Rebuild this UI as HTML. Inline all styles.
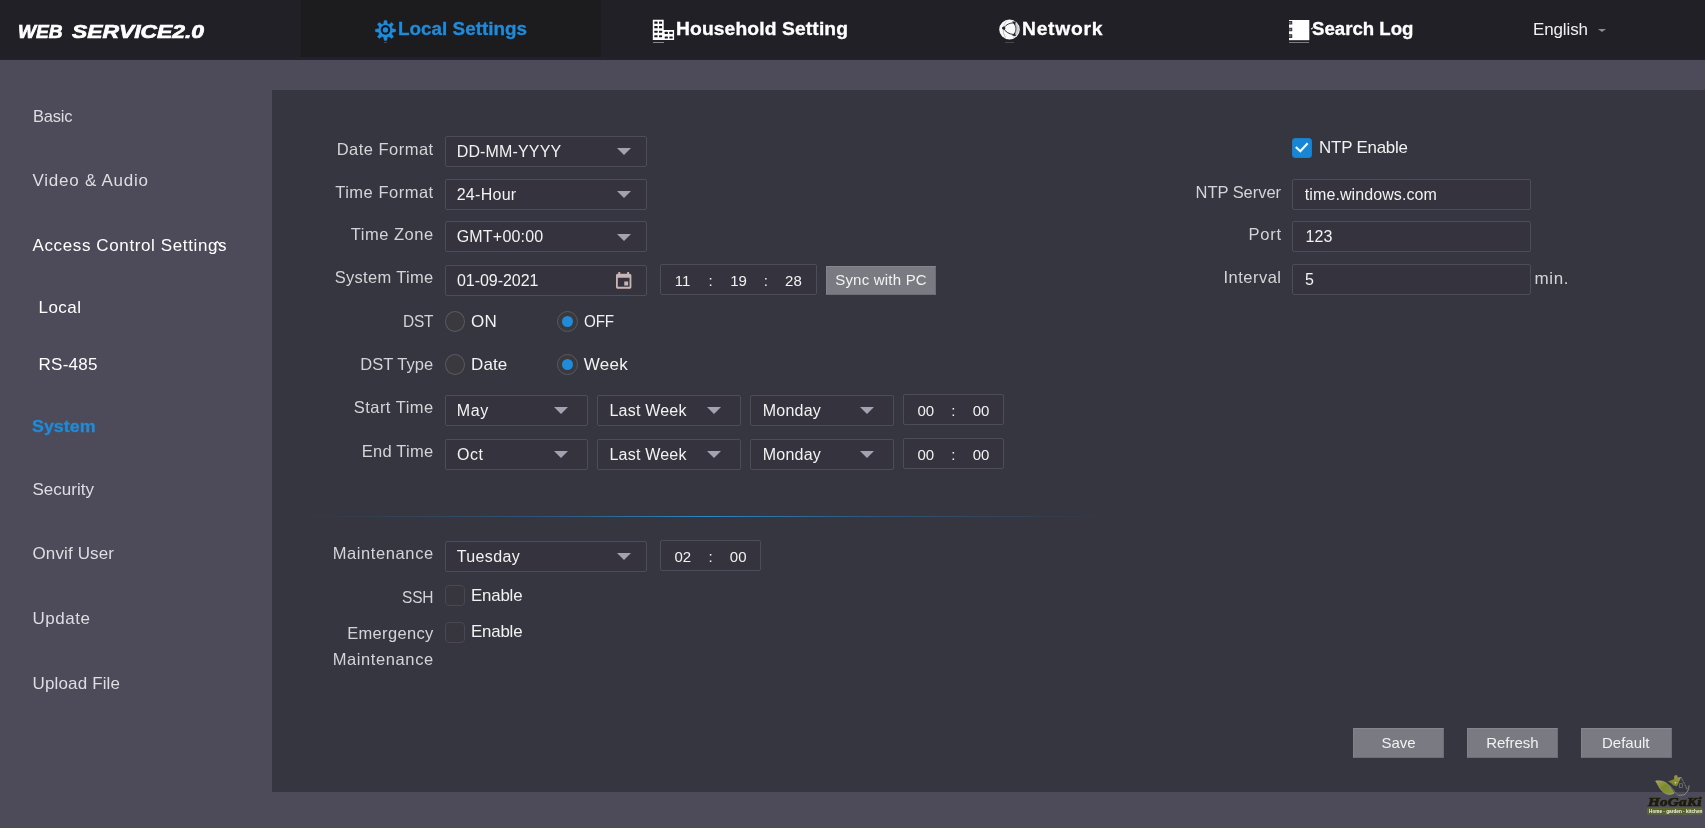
<!DOCTYPE html>
<html lang="en">
<head>
<meta charset="utf-8">
<title>WEB SERVICE2.0</title>
<style>
*{box-sizing:border-box;margin:0;padding:0}
html,body{width:1705px;height:828px;overflow:hidden}
body{background:#4d4b59;font-family:"Liberation Sans",Arial,sans-serif;color:#fff;position:relative}
#root{position:absolute;left:0;top:0;width:1705px;height:828px;will-change:transform}
.t{position:absolute;white-space:nowrap;display:block}
#header{position:absolute;left:0;top:0;width:1705px;height:60px;background:#212027}
#tab-active{position:absolute;left:301px;top:0;width:300px;height:57px;background:#1c1b1e}
#hstrip{position:absolute;left:0;top:57px;width:1705px;height:3px;background:#23212b}
.logo{position:absolute;top:19px;font-weight:bold;font-style:italic;font-size:18.5px;line-height:26px;color:#fff;white-space:nowrap;transform-origin:0 50%;-webkit-text-stroke:0.7px #fff}
#lang-caret{position:absolute;left:1598px;top:29px;width:0;height:0;border-left:4px solid transparent;border-right:4px solid transparent;border-top:3.600px solid #8d8c9a}
#panel{position:absolute;left:272px;top:90px;width:1433px;height:702px;background:#363640}
.box{position:absolute;height:31px;border:1px solid #4d4c5a;background:#35343e;border-radius:2px}
.car{position:absolute;width:0;height:0;border-left:7px solid transparent;border-right:7px solid transparent;border-top:7px solid #a3a2b1}
.radio{position:absolute;width:21px;height:21px;border-radius:50%;border:1px solid #5a595e;background:#3a393e}
.radio.on::after{content:"";position:absolute;left:4px;top:4px;width:11px;height:11px;border-radius:50%;background:#1f8bd9}
.chk{position:absolute;width:20px;height:21px;border-radius:4px;border:1px solid #484752;background:#37363f}
.chk.on{height:20px;background:#1786d4;border-color:#1c7cc4;border-radius:3px}
.btn{position:absolute;height:30px;background:#7a7a82;border-top:1px solid #86868e;border-left:1px solid #828289;border-bottom:1px solid #6d6d75;border-right:1px solid #6d6d75}
#hr{position:absolute;left:305px;top:516px;width:805px;height:1px;background:linear-gradient(90deg,rgba(40,120,180,0) 0%,rgba(42,110,165,.55) 30%,rgba(45,135,195,1) 50%,rgba(42,110,165,.55) 70%,rgba(40,120,180,0) 100%)}
svg{position:absolute;overflow:visible}
</style>
</head>
<body>
<div id="root">
<div id="header">
  <div id="tab-active"></div>
  <div id="hstrip"></div>
  <div class="logo" style="left:17.800px;transform:scaleX(1.030)">WEB</div>
  <div class="logo" style="left:72px;transform:scaleX(1.235)">SERVICE2.0</div>
  <div id="lang-caret"></div>
</div>
<div id="panel"></div>

<!-- select boxes -->
<div class="box" style="left:445px;top:136px;width:202px"></div><i class="car" style="left:617px;top:148px"></i>
<div class="box" style="left:445px;top:179px;width:202px"></div><i class="car" style="left:617px;top:191px"></i>
<div class="box" style="left:445px;top:221px;width:202px"></div><i class="car" style="left:617px;top:234px"></i>
<div class="box" style="left:445px;top:265px;width:202px"></div>
<div class="box" style="left:660px;top:264px;width:157px"></div>
<div class="btn" style="left:826px;top:266px;width:110px;height:29px"></div>

<div class="radio" style="left:445px;top:311px;width:20px"></div>
<div class="radio on" style="left:557px;top:311px"></div>
<div class="radio" style="left:445px;top:354px;width:20px"></div>
<div class="radio on" style="left:557px;top:354px"></div>

<div class="box" style="left:445px;top:395px;width:143px"></div><i class="car" style="left:554px;top:407px"></i>
<div class="box" style="left:597px;top:395px;width:144px"></div><i class="car" style="left:707px;top:407px"></i>
<div class="box" style="left:750px;top:395px;width:144px"></div><i class="car" style="left:860px;top:407px"></i>
<div class="box" style="left:903px;top:394px;width:101px"></div>
<div class="box" style="left:445px;top:439px;width:143px"></div><i class="car" style="left:554px;top:451px"></i>
<div class="box" style="left:597px;top:439px;width:144px"></div><i class="car" style="left:707px;top:451px"></i>
<div class="box" style="left:750px;top:439px;width:144px"></div><i class="car" style="left:860px;top:451px"></i>
<div class="box" style="left:903px;top:438px;width:101px"></div>

<div id="hr"></div>

<div class="box" style="left:445px;top:541px;width:202px"></div><i class="car" style="left:617px;top:553px"></i>
<div class="box" style="left:660px;top:540px;width:101px"></div>
<div class="chk" style="left:445px;top:585px"></div>
<div class="chk" style="left:445px;top:622px"></div>

<!-- NTP -->
<div class="chk on" style="left:1292.400px;top:138.400px"></div>
<svg style="left:1292.400px;top:138.400px" width="20" height="20" viewBox="0 0 20 20"><path d="M3.800 9 L8.300 13.300 L15.700 5.200" fill="none" stroke="#effbff" stroke-width="2.100"/></svg>
<div class="box" style="left:1292px;top:179px;width:239px"></div>
<div class="box" style="left:1292px;top:221px;width:239px"></div>
<div class="box" style="left:1292px;top:264px;width:239px"></div>

<div class="btn" style="left:1353px;top:728px;width:91px"></div>
<div class="btn" style="left:1467px;top:728px;width:91px"></div>
<div class="btn" style="left:1581px;top:728px;width:91px"></div>


<!-- nav icons -->
<svg style="left:375px;top:20px" width="21" height="21" viewBox="0 0 21 21"><path d="M8.63 3.75 L9.23 0.38 L11.77 0.38 L12.37 3.75 L13.95 4.41 L16.76 2.44 L18.56 4.24 L16.59 7.05 L17.25 8.63 L20.62 9.23 L20.62 11.77 L17.25 12.37 L16.59 13.95 L18.56 16.76 L16.76 18.56 L13.95 16.59 L12.37 17.25 L11.77 20.62 L9.23 20.62 L8.63 17.25 L7.05 16.59 L4.24 18.56 L2.44 16.76 L4.41 13.95 L3.75 12.37 L0.38 11.77 L0.38 9.23 L3.75 8.63 L4.41 7.05 L2.44 4.24 L4.24 2.44 L7.05 4.41Z" fill="#1f8bd9" stroke="#1f8bd9" stroke-width="0.400" stroke-linejoin="round"/><circle cx="10.500" cy="9.900" r="4.800" fill="#0d1a26"/><circle cx="10.500" cy="9.900" r="2.600" fill="#1f8bd9"/></svg>
<div style="position:absolute;left:384px;top:42px;width:3px;height:1px;background:#45444b"></div>
<svg style="left:653px;top:20px" width="22" height="20" viewBox="0 0 22 20"><path d="M-0.200 -0.200H10.700V10H21.100V19.900H-0.200Z" fill="#fff"/>
<g fill="#1b1a20"><rect x="1.3" y="1.55" width="3.3" height="2.100" rx="0.500"/><rect x="6.0" y="1.55" width="3.1" height="2.100" rx="0.500"/><rect x="1.3" y="6.05" width="3.3" height="2.100" rx="0.500"/><rect x="6.0" y="6.05" width="3.1" height="2.100" rx="0.500"/><rect x="1.3" y="10.75" width="3.3" height="2.100" rx="0.500"/><rect x="6.0" y="10.75" width="3.1" height="2.100" rx="0.500"/><rect x="1.3" y="15.25" width="3.3" height="2.100" rx="0.500"/><rect x="6.0" y="15.25" width="3.1" height="2.100" rx="0.500"/><rect x="11.7" y="11.85" width="3.2" height="2.100" rx="0.500"/><rect x="16.4" y="11.85" width="3.3" height="2.100" rx="0.500"/><rect x="11.7" y="16.45" width="3.2" height="2.100" rx="0.500"/><rect x="16.4" y="16.45" width="3.3" height="2.100" rx="0.500"/></g></svg>
<div style="position:absolute;left:653px;top:42px;width:11px;height:1px;background:#8a8990"></div>
<svg style="left:999px;top:19.400px" width="21" height="21" viewBox="0 0 21 21"><ellipse cx="10.500" cy="10.500" rx="10.300" ry="9.900" fill="#f8f8f8"/>
<path d="M15.100 3.900 Q19 9.800 15.100 15.700 L13.600 19.400 Q19.600 16.800 20.300 10.400 Q19.800 4.200 14.400 1.600Z" fill="#cfcfd2"/>
<g fill="none" stroke="#2e2d34"><path d="M4.500 9.100 Q8.400 3.700 15.100 3.900" stroke-width="0.900"/><path d="M4.500 9.100 Q7 14.600 15.100 15.700" stroke-width="1"/><path d="M15.100 3.900 Q18.800 9.800 15.100 15.700" stroke="#6c6b72" stroke-width="1.300"/><path d="M4.500 9.100 Q3.200 14 6.500 18.500" stroke="#b0b0b5" stroke-width="0.800"/><path d="M4.500 9.100 Q4.500 4.500 8 1.500" stroke="#c4c4c8" stroke-width="0.700"/></g>
<g fill="#25242b"><circle cx="4.700" cy="9.100" r="1.700"/><path d="M13 2.600 L16.900 2.500 L15.900 6.300Z"/><path d="M13.200 16.700 L15.700 13.400 L17 17Z"/></g></svg>
<div style="position:absolute;left:1005px;top:42px;width:9px;height:1px;background:#48474e"></div>
<svg style="left:1288.800px;top:19.800px" width="21" height="21" viewBox="0 0 21 21"><rect x="0" y="0" width="20.300" height="20.200" fill="#fff"/>
<g fill="#77767c" stroke="#34333a" stroke-width="1.100"><path d="M0 1.500H2.700V4H0"/><path d="M0 8.200H2.700V10.800H0"/><path d="M0 14.700H2.700V17.400H0"/></g><path d="M21.600 9 L23.800 7 L23.800 8.600 L22.800 9.600Z" fill="#fff"/></svg>
<div style="position:absolute;left:1289px;top:42px;width:20px;height:1px;background:#7d7c84"></div>
<!-- sidebar chevron -->
<svg style="left:213px;top:240px" width="10" height="8" viewBox="0 0 10 8"><path d="M1 4.600 L4.200 1.600 L9 6.400" fill="none" stroke="#fff" stroke-width="1.300"/></svg>
<!-- calendar icon -->
<svg style="left:616px;top:272.300px" width="15.400" height="16.700" viewBox="0 0 16 17" preserveAspectRatio="none"><path d="M2.4 0h2v1.8h7.2V0h2v1.8h0.6c1 0 1.8 0.8 1.8 1.8V15.2c0 1-0.8 1.8-1.8 1.8H1.8C0.8 17 0 16.2 0 15.2V3.6C0 2.600 0.800 1.800 1.800 1.800h0.600zM1.900 5.900V15.100H14.100V5.900zM8.600 9.800h4v4h-4z" fill="#c9b5b5" fill-rule="evenodd"/></svg>


<!-- watermark -->
<svg style="left:1647px;top:775px" width="58" height="42" viewBox="0 0 58 42">
<defs><linearGradient id="lg" x1="0" y1="0" x2="1" y2="1"><stop offset="0" stop-color="#a9a552"/><stop offset="0.45" stop-color="#7d8a2c"/><stop offset="1" stop-color="#8a9636"/></linearGradient>
<linearGradient id="rg" x1="0" y1="1" x2="1" y2="0"><stop offset="0" stop-color="#6f8228"/><stop offset="0.6" stop-color="#8a8f38"/><stop offset="1" stop-color="#b0a45a"/></linearGradient></defs>
<path d="M8.6 6 C13 5.200 18.500 6.200 22 10.400 C24.200 13.200 25.400 16 27.300 17.900 C25.400 19.400 22 19.800 19.600 19 C15.800 17.600 13.400 14.400 11.800 11.600 C10.600 9.500 9.800 7.500 8.600 6Z" fill="url(#lg)" stroke="#b9b98a" stroke-width="0.5"/>
<path d="M20.8 6.400 L27 4.200 L27.200 1.200 C27.600 0.200 29.800 0 30.200 0.600 L30.600 2.600 L34.200 2.100 L30 11.300 L26.600 10.600 C25.400 8.800 23.400 7.200 20.800 6.400Z" fill="url(#rg)"/>
<circle cx="28.500" cy="7.700" r="0.800" fill="#e8e4a8"/>
<path d="M34.200 2.400 L40.200 14.200" fill="none" stroke="#7f9088" stroke-width="1.100" stroke-dasharray="1 0.700"/>
<path d="M23 10.600 C25.500 13.500 28 17.500 31.200 20.200" fill="none" stroke="#8d9c8c" stroke-width="1" stroke-dasharray="0.900 0.600"/>
<path d="M42 10.400 C42.200 14.500 40 18 37 19.900 L31.200 20.300" fill="none" stroke="#8e9684" stroke-width="0.900"/>
<rect x="32.600" y="8.800" width="3" height="3.600" fill="none" stroke="#85878c" stroke-width="0.600"/>
<g transform="translate(1 30.800) scale(1.170 1)"><text x="0" y="0" font-family="'Liberation Serif',serif" font-weight="bold" font-style="italic" font-size="13" fill="#1d1d08" stroke="#1d1d08" stroke-width="0.700" letter-spacing="0.200">HoGaKi</text></g>
<rect x="0.400" y="33" width="54.800" height="6.300" rx="0.800" fill="#566328" stroke="#6f7a44" stroke-width="0.400"/>
<g transform="translate(2 38) scale(0.500)"><text x="0" y="0" font-family="'Liberation Sans',sans-serif" font-weight="bold" font-size="9.400" fill="#f4f4ea">Home - garden - kitchen</text></g>
</svg>

<span class="t" style="left:398.0px;top:16.6px;font-size:18px;line-height:25px;color:#1f8bd9;font-weight:bold;-webkit-text-stroke:0.3px #1f8bd9;transform-origin:0 0;transform:scaleX(1.049);">Local Settings</span>
<span class="t" style="left:675.8px;top:16.6px;font-size:18px;line-height:25px;color:#fff;font-weight:bold;-webkit-text-stroke:0.3px #fff;letter-spacing:0.11px;transform-origin:0 0;transform:scaleX(1.070);">Household Setting</span>
<span class="t" style="left:1021.9px;top:16.6px;font-size:18px;line-height:25px;color:#fff;font-weight:bold;-webkit-text-stroke:0.3px #fff;letter-spacing:0.70px;transform-origin:0 0;transform:scaleX(1.070);">Network</span>
<span class="t" style="left:1311.5px;top:16.6px;font-size:18px;line-height:25px;color:#fff;font-weight:bold;-webkit-text-stroke:0.3px #fff;transform-origin:0 0;transform:scaleX(1.035);">Search Log</span>
<span class="t" style="left:1533.0px;top:17.8px;font-size:17px;line-height:24px;color:#f0f0f0;letter-spacing:-0.13px;">English</span>
<span class="t" style="left:32.5px;top:104.9px;font-size:17px;line-height:24px;color:#dedee2;letter-spacing:-0.20px;transform-origin:0 0;transform:scaleX(0.969);">Basic</span>
<span class="t" style="left:32.5px;top:169.4px;font-size:17px;line-height:24px;color:#dedee2;letter-spacing:0.75px;">Video &amp; Audio</span>
<span class="t" style="left:32.5px;top:234.3px;font-size:17px;line-height:24px;color:#fff;letter-spacing:0.62px;">Access Control Settings</span>
<span class="t" style="left:38.5px;top:295.5px;font-size:17px;line-height:24px;color:#fff;letter-spacing:0.46px;">Local</span>
<span class="t" style="left:38.5px;top:353.0px;font-size:17px;line-height:24px;color:#fff;letter-spacing:0.27px;">RS-485</span>
<span class="t" style="left:31.9px;top:414.7px;font-size:17px;line-height:24px;color:#1f8bd9;font-weight:bold;-webkit-text-stroke:0.3px #1f8bd9;transform-origin:0 0;transform:scaleX(1.050);">System</span>
<span class="t" style="left:32.5px;top:477.5px;font-size:17px;line-height:24px;color:#dedee2;letter-spacing:0.01px;">Security</span>
<span class="t" style="left:32.5px;top:542.3px;font-size:17px;line-height:24px;color:#dedee2;letter-spacing:0.13px;">Onvif User</span>
<span class="t" style="left:32.5px;top:606.5px;font-size:17px;line-height:24px;color:#dedee2;letter-spacing:0.53px;">Update</span>
<span class="t" style="left:32.5px;top:671.6px;font-size:17px;line-height:24px;color:#dedee2;letter-spacing:0.15px;">Upload File</span>
<span class="t" style="left:336.7px;top:138.0px;font-size:16.5px;line-height:23px;color:#d4d4d8;letter-spacing:0.48px;">Date Format</span>
<span class="t" style="left:335.2px;top:181.0px;font-size:16.5px;line-height:23px;color:#d4d4d8;letter-spacing:0.51px;">Time Format</span>
<span class="t" style="left:350.7px;top:223.3px;font-size:16.5px;line-height:23px;color:#d4d4d8;letter-spacing:0.53px;">Time Zone</span>
<span class="t" style="left:334.7px;top:266.3px;font-size:16.5px;line-height:23px;color:#d4d4d8;letter-spacing:0.31px;">System Time</span>
<span class="t" style="left:402.7px;top:309.6px;font-size:16.5px;line-height:23px;color:#d4d4d8;letter-spacing:-0.20px;transform-origin:0 0;transform:scaleX(0.936);">DST</span>
<span class="t" style="left:360.2px;top:352.6px;font-size:16.5px;line-height:23px;color:#d4d4d8;letter-spacing:0.03px;">DST Type</span>
<span class="t" style="left:353.7px;top:396.1px;font-size:16.5px;line-height:23px;color:#d4d4d8;letter-spacing:0.48px;">Start Time</span>
<span class="t" style="left:361.7px;top:440.1px;font-size:16.5px;line-height:23px;color:#d4d4d8;letter-spacing:0.26px;">End Time</span>
<span class="t" style="left:332.7px;top:542.4px;font-size:16.5px;line-height:23px;color:#d4d4d8;letter-spacing:0.60px;">Maintenance</span>
<span class="t" style="left:401.7px;top:586.4px;font-size:16.5px;line-height:23px;color:#d4d4d8;letter-spacing:-0.20px;transform-origin:0 0;transform:scaleX(0.939);">SSH</span>
<span class="t" style="left:347.2px;top:622.4px;font-size:16.5px;line-height:23px;color:#d4d4d8;letter-spacing:0.32px;">Emergency</span>
<span class="t" style="left:332.7px;top:648.0px;font-size:16.5px;line-height:23px;color:#d4d4d8;letter-spacing:0.60px;">Maintenance</span>
<span class="t" style="left:456.7px;top:140.5px;font-size:16px;line-height:22px;color:#f2f2f2;letter-spacing:0.15px;">DD-MM-YYYY</span>
<span class="t" style="left:456.7px;top:183.5px;font-size:16px;line-height:22px;color:#f2f2f2;letter-spacing:0.28px;">24-Hour</span>
<span class="t" style="left:456.7px;top:225.8px;font-size:16px;line-height:22px;color:#f2f2f2;letter-spacing:0.20px;">GMT+00:00</span>
<span class="t" style="left:457.0px;top:269.5px;font-size:16px;line-height:22px;color:#f2f2f2;letter-spacing:-0.04px;">01-09-2021</span>
<span class="t" style="left:456.7px;top:399.5px;font-size:16px;line-height:22px;color:#f2f2f2;letter-spacing:0.63px;">May</span>
<span class="t" style="left:457.0px;top:443.5px;font-size:16px;line-height:22px;color:#f2f2f2;letter-spacing:0.55px;">Oct</span>
<span class="t" style="left:609.5px;top:399.5px;font-size:16px;line-height:22px;color:#f2f2f2;letter-spacing:0.21px;">Last Week</span>
<span class="t" style="left:609.5px;top:443.5px;font-size:16px;line-height:22px;color:#f2f2f2;letter-spacing:0.21px;">Last Week</span>
<span class="t" style="left:762.8px;top:399.5px;font-size:16px;line-height:22px;color:#f2f2f2;letter-spacing:0.22px;">Monday</span>
<span class="t" style="left:762.8px;top:443.5px;font-size:16px;line-height:22px;color:#f2f2f2;letter-spacing:0.22px;">Monday</span>
<span class="t" style="left:456.7px;top:545.5px;font-size:16px;line-height:22px;color:#f2f2f2;letter-spacing:0.37px;">Tuesday</span>
<span class="t" style="left:674.8px;top:269.8px;font-size:15px;line-height:21px;color:#f2f2f2;">11</span>
<span class="t" style="left:708.6px;top:269.8px;font-size:15px;line-height:21px;color:#f2f2f2;">:</span>
<span class="t" style="left:730.2px;top:269.8px;font-size:15px;line-height:21px;color:#f2f2f2;">19</span>
<span class="t" style="left:763.7px;top:269.8px;font-size:15px;line-height:21px;color:#f2f2f2;">:</span>
<span class="t" style="left:785.1px;top:269.8px;font-size:15px;line-height:21px;color:#f2f2f2;">28</span>
<span class="t" style="left:917.4px;top:399.8px;font-size:15px;line-height:21px;color:#f2f2f2;">00</span>
<span class="t" style="left:951.3px;top:399.8px;font-size:15px;line-height:21px;color:#f2f2f2;">:</span>
<span class="t" style="left:972.7px;top:399.8px;font-size:15px;line-height:21px;color:#f2f2f2;">00</span>
<span class="t" style="left:917.4px;top:443.8px;font-size:15px;line-height:21px;color:#f2f2f2;">00</span>
<span class="t" style="left:951.3px;top:443.8px;font-size:15px;line-height:21px;color:#f2f2f2;">:</span>
<span class="t" style="left:972.7px;top:443.8px;font-size:15px;line-height:21px;color:#f2f2f2;">00</span>
<span class="t" style="left:674.5px;top:546.3px;font-size:15px;line-height:21px;color:#f2f2f2;">02</span>
<span class="t" style="left:708.5px;top:546.3px;font-size:15px;line-height:21px;color:#f2f2f2;">:</span>
<span class="t" style="left:729.8px;top:546.3px;font-size:15px;line-height:21px;color:#f2f2f2;">00</span>
<span class="t" style="left:471.1px;top:309.9px;font-size:17px;line-height:24px;color:#f2f2f2;letter-spacing:0.20px;">ON</span>
<span class="t" style="left:583.7px;top:309.9px;font-size:17px;line-height:24px;color:#f2f2f2;letter-spacing:-0.20px;transform-origin:0 0;transform:scaleX(0.893);">OFF</span>
<span class="t" style="left:471.1px;top:352.9px;font-size:17px;line-height:24px;color:#f2f2f2;letter-spacing:0.09px;">Date</span>
<span class="t" style="left:583.7px;top:352.9px;font-size:17px;line-height:24px;color:#f2f2f2;letter-spacing:0.28px;">Week</span>
<span class="t" style="left:471.1px;top:583.6px;font-size:17px;line-height:24px;color:#f2f2f2;letter-spacing:-0.20px;transform-origin:0 0;transform:scaleX(0.992);">Enable</span>
<span class="t" style="left:471.1px;top:619.6px;font-size:17px;line-height:24px;color:#f2f2f2;letter-spacing:-0.20px;transform-origin:0 0;transform:scaleX(0.992);">Enable</span>
<span class="t" style="left:1318.7px;top:135.5px;font-size:17px;line-height:24px;color:#f2f2f2;letter-spacing:-0.20px;transform-origin:0 0;transform:scaleX(0.994);">NTP Enable</span>
<span class="t" style="left:1195.5px;top:181.0px;font-size:16.5px;line-height:23px;color:#d4d4d8;letter-spacing:-0.04px;">NTP Server</span>
<span class="t" style="left:1248.5px;top:223.3px;font-size:16.5px;line-height:23px;color:#d4d4d8;letter-spacing:0.74px;">Port</span>
<span class="t" style="left:1223.5px;top:266.3px;font-size:16.5px;line-height:23px;color:#d4d4d8;letter-spacing:0.48px;">Interval</span>
<span class="t" style="left:1304.8px;top:183.5px;font-size:16px;line-height:22px;color:#f2f2f2;letter-spacing:0.09px;">time.windows.com</span>
<span class="t" style="left:1305.5px;top:225.8px;font-size:16px;line-height:22px;color:#f2f2f2;letter-spacing:0.15px;">123</span>
<span class="t" style="left:1305.0px;top:268.8px;font-size:16px;line-height:22px;color:#f2f2f2;">5</span>
<span class="t" style="left:1534.5px;top:267.1px;font-size:17px;line-height:24px;color:#d4d4d8;letter-spacing:0.62px;">min.</span>
<span class="t" style="left:835.2px;top:269.1px;font-size:15px;line-height:21px;color:#f2f2f2;letter-spacing:0.21px;">Sync with PC</span>
<span class="t" style="left:1381.4px;top:732.3px;font-size:15px;line-height:21px;color:#f2f2f2;">Save</span>
<span class="t" style="left:1486.2px;top:732.3px;font-size:15px;line-height:21px;color:#f2f2f2;">Refresh</span>
<span class="t" style="left:1602.0px;top:732.3px;font-size:15px;line-height:21px;color:#f2f2f2;">Default</span>
</div>
</body>
</html>
